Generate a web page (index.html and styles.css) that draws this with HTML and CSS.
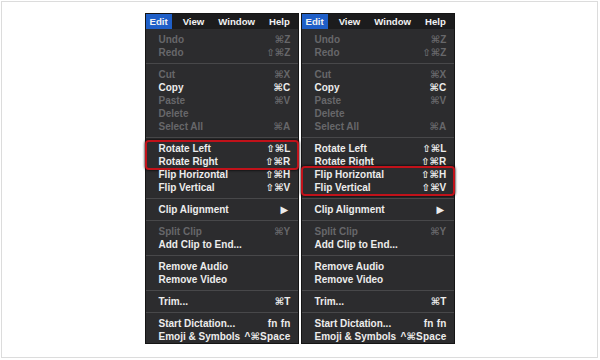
FILE: index.html
```html
<!DOCTYPE html>
<html>
<head>
<meta charset="utf-8">
<link rel="stylesheet" href="styles.css">
</head>
<body>
<div class="frame">
  <div class="menus">
    <div class="menu">
      <div class="bar"><span class="bi active">Edit</span><span class="bi">View</span><span class="bi">Window</span><span class="bi">Help</span></div>
      <div class="body">
        <div class="item dis"><span>Undo</span><span class="k">⌘Z</span></div>
        <div class="item dis"><span>Redo</span><span class="k">⇧⌘Z</span></div>
        <div class="sep"></div>
        <div class="item dis"><span>Cut</span><span class="k">⌘X</span></div>
        <div class="item"><span>Copy</span><span class="k">⌘C</span></div>
        <div class="item dis"><span>Paste</span><span class="k">⌘V</span></div>
        <div class="item dis"><span>Delete</span><span class="k"></span></div>
        <div class="item dis"><span>Select All</span><span class="k">⌘A</span></div>
        <div class="sep"></div>
        <div class="hl">
          <div class="item"><span>Rotate Left</span><span class="k">⇧⌘L</span></div>
          <div class="item"><span>Rotate Right</span><span class="k">⇧⌘R</span></div>
        </div>
        <div class="item"><span>Flip Horizontal</span><span class="k">⇧⌘H</span></div>
        <div class="item"><span>Flip Vertical</span><span class="k">⇧⌘V</span></div>
        <div class="sep"></div>
        <div class="item"><span>Clip Alignment</span><span class="k arrow">▶</span></div>
        <div class="sep"></div>
        <div class="item dis"><span>Split Clip</span><span class="k">⌘Y</span></div>
        <div class="item"><span>Add Clip to End...</span><span class="k"></span></div>
        <div class="sep"></div>
        <div class="item"><span>Remove Audio</span><span class="k"></span></div>
        <div class="item"><span>Remove Video</span><span class="k"></span></div>
        <div class="sep"></div>
        <div class="item"><span>Trim...</span><span class="k">⌘T</span></div>
        <div class="sep"></div>
        <div class="item"><span>Start Dictation...</span><span class="k">fn fn</span></div>
        <div class="item"><span>Emoji &amp; Symbols</span><span class="k">^⌘Space</span></div>
      </div>
    </div>
    <div class="menu">
      <div class="bar"><span class="bi active">Edit</span><span class="bi">View</span><span class="bi">Window</span><span class="bi">Help</span></div>
      <div class="body">
        <div class="item dis"><span>Undo</span><span class="k">⌘Z</span></div>
        <div class="item dis"><span>Redo</span><span class="k">⇧⌘Z</span></div>
        <div class="sep"></div>
        <div class="item dis"><span>Cut</span><span class="k">⌘X</span></div>
        <div class="item"><span>Copy</span><span class="k">⌘C</span></div>
        <div class="item dis"><span>Paste</span><span class="k">⌘V</span></div>
        <div class="item dis"><span>Delete</span><span class="k"></span></div>
        <div class="item dis"><span>Select All</span><span class="k">⌘A</span></div>
        <div class="sep"></div>
        <div class="item"><span>Rotate Left</span><span class="k">⇧⌘L</span></div>
        <div class="item"><span>Rotate Right</span><span class="k">⇧⌘R</span></div>
        <div class="hl">
          <div class="item"><span>Flip Horizontal</span><span class="k">⇧⌘H</span></div>
          <div class="item"><span>Flip Vertical</span><span class="k">⇧⌘V</span></div>
        </div>
        <div class="sep"></div>
        <div class="item"><span>Clip Alignment</span><span class="k arrow">▶</span></div>
        <div class="sep"></div>
        <div class="item dis"><span>Split Clip</span><span class="k">⌘Y</span></div>
        <div class="item"><span>Add Clip to End...</span><span class="k"></span></div>
        <div class="sep"></div>
        <div class="item"><span>Remove Audio</span><span class="k"></span></div>
        <div class="item"><span>Remove Video</span><span class="k"></span></div>
        <div class="sep"></div>
        <div class="item"><span>Trim...</span><span class="k">⌘T</span></div>
        <div class="sep"></div>
        <div class="item"><span>Start Dictation...</span><span class="k">fn fn</span></div>
        <div class="item"><span>Emoji &amp; Symbols</span><span class="k">^⌘Space</span></div>
      </div>
    </div>
  </div>
</div>
</body>
</html>
```
FILE: styles.css
```css
html, body {
  margin: 0;
  padding: 0;
  background: #ffffff;
}
body {
  width: 600px;
  height: 360px;
  font-family: "Liberation Sans", "DejaVu Sans", sans-serif;
}
.frame {
  margin: 1px 0 0 1px;
  width: 597px;
  height: 357px;
  border: 1px solid #dcdcdc;
  display: flex;
  justify-content: center;
  padding-top: 11px;
  box-sizing: border-box;
}
.menus {
  display: flex;
  gap: 2px;
}
.menu {
  width: 154px;
  height: 331px;
  background: #2c2c2e;
  border: 1px solid #151515;
  box-sizing: border-box;
  display: flex;
  flex-direction: column;
}
.bar {
  height: 15px;
  background: #1c1c1d;
  display: flex;
  align-items: stretch;
  gap: 8px;
  font-size: 9.6px;
  font-weight: bold;
  color: #f2f2f2;
}
.bi {
  padding: 0 3px;
  display: flex;
  align-items: center;
}
.bi.active {
  background: #1f5fc8;
  padding: 0 4px;
}
.body {
  padding-top: 4px;
  display: flex;
  flex-direction: column;
}
.item {
  height: 13px;
  display: flex;
  justify-content: space-between;
  align-items: center;
  padding: 0 7px 0 13px;
  font-size: 10px;
  font-weight: bold;
  color: #ececec;
  white-space: nowrap;
}
.item.dis {
  color: #67676a;
}
.k {
  letter-spacing: 0.2px;
}
.arrow {
  font-size: 10px;
  padding-right: 2px;
}
.sep {
  height: 1px;
  background: #48484a;
  margin: 4px 0;
}
.hl {
  margin: 0 1px;
  border-radius: 2px;
  box-shadow: 0 0 0 2px #c1121a, 0 0 2px 3px rgba(0, 0, 0, 0.55);
}
.hl .item {
  padding-left: 12px;
  padding-right: 6px;
}
```
